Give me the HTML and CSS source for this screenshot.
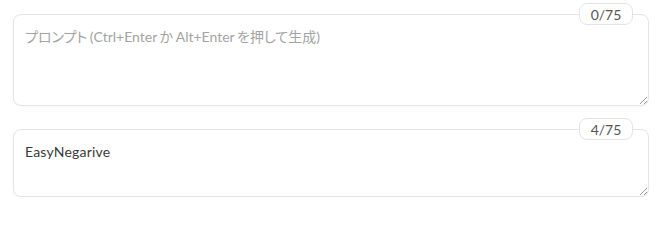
FILE: index.html
```html
<!DOCTYPE html>
<html lang="ja">
<head>
<meta charset="utf-8">
<title>Prompt</title>
<link rel="stylesheet" href="styles.css">
</head>
<body>
<div class="stack">
  <div class="field">
    <div class="box box-tall"><span class="placeholder">プロンプト (Ctrl+Enter か Alt+Enter を押して生成)</span></div>
    <span class="counter">0/75</span>
    <svg class="grip" width="10" height="10" viewBox="0 0 10 10"><path d="M9 2 L2 9 M9 6 L6 9" stroke="#9a9a9a" stroke-width="1" fill="none"/></svg>
  </div>
  <div class="field">
    <div class="box box-short"><span class="value">EasyNegarive</span></div>
    <span class="counter">4/75</span>
    <svg class="grip" width="10" height="10" viewBox="0 0 10 10"><path d="M9 2 L2 9 M9 6 L6 9" stroke="#9a9a9a" stroke-width="1" fill="none"/></svg>
  </div>
</div>
</body>
</html>
```
FILE: styles.css
```css
html, body {
  margin: 0;
  background: #ffffff;
}
body {
  font-family: Lato, "Noto Sans CJK JP", sans-serif;
  font-size: 14px;
  font-feature-settings: "palt" 1;
}
.stack {
  display: flex;
  flex-direction: column;
  gap: 23px;
  padding: 14px 8px 0 13px;
}
.field {
  position: relative;
}
.box {
  box-sizing: border-box;
  border: 1px solid #e4e4e4;
  border-radius: 8px;
  padding: 12px 11px;
  line-height: 20px;
  background: #fff;
  box-shadow: 0 1px 2px rgba(0,0,0,0.03);
}
.box-tall { height: 92px; }
.box-short { height: 68px; }
.placeholder { color: #a3a3a3; word-spacing: -1px; }
.value { color: #3a3a3a; letter-spacing: 0.2px; }
.counter {
  position: absolute;
  top: -11px;
  right: 16px;
  box-sizing: border-box;
  height: 22px;
  width: 54px;
  display: flex;
  align-items: center;
  justify-content: center;
  background: #fff;
  border: 1px solid #e4e4e4;
  border-radius: 8px;
  color: #555555;
  font-size: 14px;
}
.grip {
  position: absolute;
  right: 1px;
  bottom: 1px;
}
```
